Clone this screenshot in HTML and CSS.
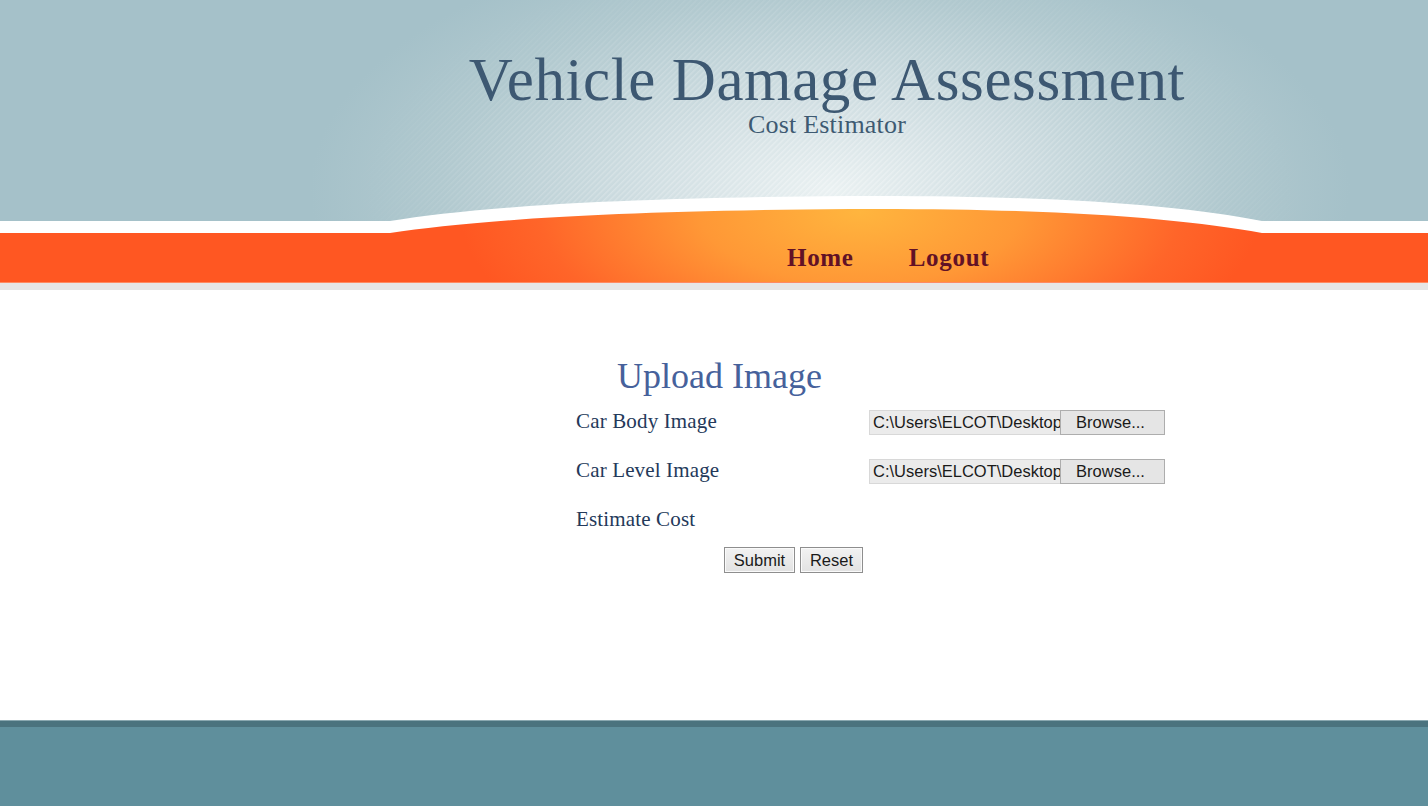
FILE: index.html
```html
<!DOCTYPE html>
<html lang="en">
<head>
<meta charset="utf-8">
<title>Vehicle Damage Assessment</title>
<link rel="stylesheet" href="styles.css">
</head>
<body>
<header class="site-header">
  <svg class="header-bg" viewBox="0 0 1428 290" preserveAspectRatio="none" aria-hidden="true">
    <defs>
      <radialGradient id="sky" gradientUnits="userSpaceOnUse" cx="830" cy="190" r="520" gradientTransform="translate(830 190) scale(1 0.5) translate(-830 -190)">
        <stop offset="0" stop-color="#eaf1f2"/>
        <stop offset="0.35" stop-color="#d0dee2"/>
        <stop offset="0.75" stop-color="#b1c9cf"/>
        <stop offset="1" stop-color="#a5c1c9"/>
      </radialGradient>
      <radialGradient id="fadeGrad" gradientUnits="userSpaceOnUse" cx="830" cy="190" r="480" gradientTransform="translate(830 190) scale(1 0.5) translate(-830 -190)">
        <stop offset="0" stop-color="#fff"/>
        <stop offset="0.6" stop-color="#888"/>
        <stop offset="1" stop-color="#000"/>
      </radialGradient>
      <mask id="fade">
        <rect width="1428" height="290" fill="url(#fadeGrad)"/>
      </mask>
      <pattern id="stripes" width="4" height="4" patternUnits="userSpaceOnUse" patternTransform="rotate(45)">
        <rect width="1.5" height="4" fill="#ffffff" opacity="0.35"/>
      </pattern>
      <radialGradient id="glow" gradientUnits="userSpaceOnUse" cx="860" cy="212" r="400" gradientTransform="translate(860 212) scale(1 0.45) translate(-860 -212)">
        <stop offset="0" stop-color="#ffb53e"/>
        <stop offset="0.4" stop-color="#ff9836"/>
        <stop offset="0.8" stop-color="#ff6529"/>
        <stop offset="1" stop-color="#ff5722"/>
      </radialGradient>
    </defs>
    <rect width="1428" height="290" fill="url(#sky)"/>
    <rect width="1428" height="290" fill="url(#stripes)" mask="url(#fade)"/>
    <path d="M0,221 H390 C470,208 600,198 850,196 C1050,195 1180,205 1262,221 H1428 V290 H0 Z" fill="#ffffff"/>
    <path d="M0,233 H390 C470,221 600,211 850,209 C1050,208 1180,218 1262,233 H1428 V283 H0 Z" fill="url(#glow)"/>
    <rect y="282" width="1428" height="1" fill="#ff8a62"/>
    <rect y="283" width="1428" height="7" fill="#e6e6e6"/>
  </svg>
  <div class="titles">
    <h1 class="site-title">Vehicle Damage Assessment</h1>
    <p class="site-subtitle">Cost Estimator</p>
  </div>
  <nav class="main-nav">
    <a href="#" class="nav-link">Home</a>
    <a href="#" class="nav-link">Logout</a>
  </nav>
</header>

<main class="content">
  <form class="upload-form" onsubmit="return false;">
    <h2 class="form-title">Upload Image</h2>
    <div class="form-rows">
      <div class="form-row">
        <span class="field-label">Car Body Image</span>
        <div class="file-field">
          <span class="file-path">C:\Users\ELCOT\Desktop</span>
          <span class="browse-btn">Browse...</span>
        </div>
      </div>
      <div class="form-row">
        <span class="field-label">Car Level Image</span>
        <div class="file-field">
          <span class="file-path">C:\Users\ELCOT\Desktop</span>
          <span class="browse-btn">Browse...</span>
        </div>
      </div>
      <div class="form-row">
        <span class="field-label">Estimate Cost</span>
        <span class="field-empty"></span>
      </div>
    </div>
    <div class="form-actions">
      <button type="submit" class="btn btn-submit">Submit</button>
      <button type="reset" class="btn btn-reset">Reset</button>
    </div>
  </form>
</main>

<footer class="site-footer"></footer>
</body>
</html>
```

FILE: styles.css
```css
* {
  box-sizing: border-box;
}

html, body {
  margin: 0;
  padding: 0;
}

body {
  width: 1428px;
  height: 806px;
  overflow: hidden;
  display: flex;
  flex-direction: column;
  background: #ffffff;
  font-family: "Liberation Serif", "Times New Roman", serif;
}

/* Header */
.site-header {
  position: relative;
  height: 290px;
  flex: none;
  display: flex;
  flex-direction: column;
}

.header-bg {
  position: absolute;
  left: 0;
  top: 0;
  width: 100%;
  height: 100%;
  z-index: 0;
  display: block;
}

.titles {
  position: relative;
  z-index: 1;
  padding-top: 49px;
  padding-left: 226px;
  text-align: center;
}

.site-title {
  margin: 0;
  font-weight: normal;
  font-size: 61px;
  line-height: 61px;
  letter-spacing: 0.6px;
  color: #3d5872;
}

.site-subtitle {
  margin: 2px 0 0;
  font-size: 26px;
  line-height: 26px;
  letter-spacing: 0.2px;
  color: #3e5a72;
}

.main-nav {
  position: relative;
  z-index: 1;
  margin-top: auto;
  margin-bottom: 20px;
  padding-left: 787px;
  display: flex;
  gap: 55px;
}

.nav-link {
  font-size: 25px;
  line-height: 25px;
  font-weight: bold;
  letter-spacing: 0.7px;
  color: #621126;
  text-decoration: none;
}

/* Content */
.content {
  flex: 1;
  padding-top: 68px;
}

.upload-form {
  margin-left: 576px;
  width: 600px;
}

.form-title {
  margin: 0;
  padding-left: 41px;
  font-weight: normal;
  font-size: 36px;
  line-height: 36px;
  color: #46619b;
}

.form-rows {
  margin-top: 16px;
  display: grid;
  row-gap: 24px;
}

.form-row {
  display: grid;
  grid-template-columns: 293px 296px;
  align-items: center;
  height: 25px;
}

.field-label {
  font-size: 21px;
  line-height: 22px;
  padding-bottom: 3px;
  letter-spacing: 0.15px;
  color: #24395a;
}

.file-field {
  display: flex;
  height: 25px;
  font-family: "Liberation Sans", Arial, sans-serif;
  font-size: 16.5px;
  color: #1a1a1a;
}

.file-path {
  width: 191px;
  height: 25px;
  padding: 0 0 0 3px;
  line-height: 23px;
  background: #ebebeb;
  border: 1px solid #d8d8d8;
  border-right: none;
  white-space: nowrap;
  overflow: hidden;
}

.browse-btn {
  width: 105px;
  height: 25px;
  padding-right: 4px;
  line-height: 23px;
  text-align: center;
  background: #e5e5e5;
  border: 1px solid #adadad;
}

.form-actions {
  margin-top: 14px;
  padding-left: 148px;
  display: flex;
  gap: 5px;
}

.btn {
  height: 26px;
  padding: 0;
  font-family: "Liberation Sans", Arial, sans-serif;
  font-size: 16.5px;
  color: #1a1a1a;
  background: linear-gradient(#f2f2f2, #e2e2e2);
  border: 1px solid #8e8e8e;
  box-shadow: inset 0 0 0 1px #fafafa;
  border-radius: 0;
}

.btn-submit {
  width: 71px;
}

.btn-reset {
  width: 63px;
}

/* Footer */
.site-footer {
  flex: none;
  height: 85px;
  background: #5f8f9c;
  border-top: 6px solid #4b737e;
  box-shadow: 0 -1px 0 #8aa8b0;
}
```
